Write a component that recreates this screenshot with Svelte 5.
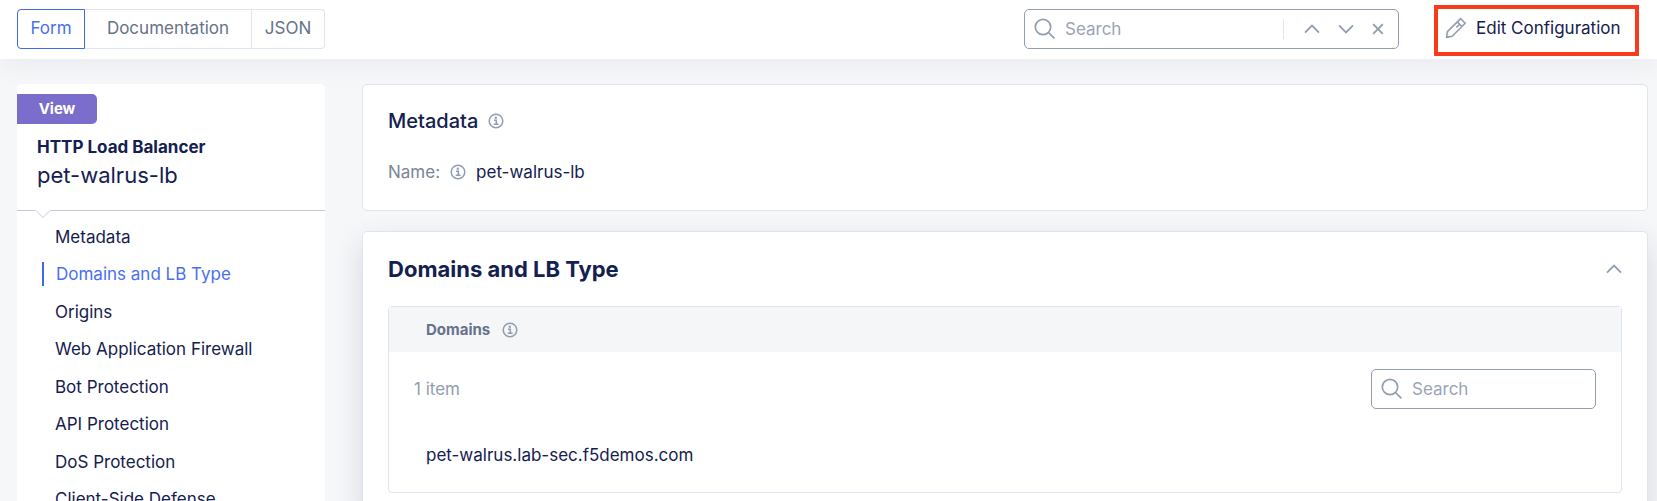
<script>
  const tabs = ['Form', 'Documentation', 'JSON'];
  let tab = $state('Form');

  const sections = [
    'Metadata',
    'Domains and LB Type',
    'Origins',
    'Web Application Firewall',
    'Bot Protection',
    'API Protection',
    'DoS Protection',
    'Client-Side Defense'
  ];
  let section = $state('Domains and LB Type');
  const domains = ['pet-walrus.lab-sec.f5demos.com'];
</script>

{#snippet info()}
  <svg class="info" viewBox="0 0 16 16" width="16" height="16" aria-hidden="true">
    <circle cx="8" cy="8" r="6.8" fill="none" stroke="currentColor" stroke-width="1.5" />
    <circle cx="7.8" cy="4.7" r="1.2" fill="currentColor" />
    <path d="M6 7.3H8.3V11.3M5.7 11.3H10.6" fill="none" stroke="currentColor" stroke-width="1.6" />
  </svg>
{/snippet}

{#snippet magnifier()}
  <svg viewBox="0 0 22 22" width="22" height="22" aria-hidden="true">
    <circle cx="9" cy="9" r="7.7" fill="none" stroke="currentColor" stroke-width="1.7" />
    <path d="M14.5 14.5L20.4 20.4" stroke="currentColor" stroke-width="1.7" />
  </svg>
{/snippet}

{#snippet chevron(d)}
  <svg viewBox="0 0 16 10" width="16" height="10" aria-hidden="true">
    <path {d} fill="none" stroke="currentColor" stroke-width="1.8" />
  </svg>
{/snippet}

<div class="page">
  <header>
    <div class="tabs">
      {#each tabs as t}
        <button class:active={tab === t} onclick={() => (tab = t)}>{t}</button>
      {/each}
    </div>
    <div class="search find">
      {@render magnifier()}
      <input type="text" placeholder="Search" aria-label="Search configuration" />
      <div class="steps">
        <button aria-label="Previous match">{@render chevron('M1 8.6L8 1.6L15 8.6')}</button>
        <button aria-label="Next match">{@render chevron('M1 1.4L8 8.4L15 1.4')}</button>
        <button aria-label="Clear search">
          <svg viewBox="0 0 12 12" width="12" height="12" aria-hidden="true">
            <path d="M1.2 1.2L10.8 10.8M10.8 1.2L1.2 10.8" stroke="currentColor" stroke-width="1.9" />
          </svg>
        </button>
      </div>
    </div>
    <button class="edit">
      <svg viewBox="0 0 22 22" width="22" height="22" aria-hidden="true">
        <path d="M1.6 20.4L2.4 14.6L15.6 1.6L20.2 6.2L7.2 19.2Z M12.3 4.9L17 9.5 M14.4 7.5L11.4 10.4" fill="none" stroke="currentColor" stroke-width="1.6" stroke-linejoin="round" />
      </svg>
      Edit Configuration
    </button>
  </header>

  <div class="body">
    <aside>
      <div class="summary">
        <span class="badge">View</span>
        <h1>HTTP Load Balancer</h1>
        <p>pet-walrus-lb</p>
        <svg class="notch" viewBox="0 0 14 9" width="14" height="9" aria-hidden="true">
          <path d="M0 0H14V1L7 8L0 1Z" fill="#fff" />
          <path d="M0.5 1L7 7.5L13.5 1" fill="none" stroke="#c5cbdd" />
        </svg>
      </div>
      <nav aria-label="Sections">
        {#each sections as s}
          <a href="#section" class:active={section === s} onclick={() => (section = s)}><span>{s}</span></a>
        {/each}
      </nav>
    </aside>

    <main>
      <section class="card metadata">
        <h2>Metadata {@render info()}</h2>
        <div class="field"><span class="label">Name:</span>{@render info()}<span>pet-walrus-lb</span></div>
      </section>

      <section class="card raised">
        <div class="head">
          <h2>Domains and LB Type</h2>
          <button aria-label="Collapse">{@render chevron('M1 8.6L8 1.6L15 8.6')}</button>
        </div>
        <div class="list">
          <h3>Domains {@render info()}</h3>
          <div class="toolbar">
            <span>{domains.length} item</span>
            <div class="search filter">
              {@render magnifier()}
              <input type="text" placeholder="Search" aria-label="Search domains" />
            </div>
          </div>
          <ul>
            {#each domains as d}<li>{d}</li>{/each}
          </ul>
        </div>
      </section>
    </main>
  </div>
</div>

<style>
  :global(body) {
    margin: 0;
  }
  .page {
    height: 100vh;
    overflow: hidden;
    background: #f6f7f9;
    color: #14204f;
    font: 17px/24px Inter, sans-serif;
  }
  .page * {
    box-sizing: border-box;
  }
  h1, h2, h3, p, ul {
    margin: 0;
    padding: 0;
  }
  button {
    font: inherit;
    color: inherit;
    background: none;
    border: 0;
    padding: 0;
    cursor: pointer;
  }
  svg {
    display: block;
    flex: none;
  }
  header {
    position: relative;
    display: flex;
    align-items: flex-start;
    height: 59px;
    padding: 5px 18px 0 17px;
    background: #fff;
    box-shadow: 0 2px 32px rgba(20, 32, 60, 0.07);
  }
  .tabs {
    display: flex;
    height: 40px;
    margin-top: 4px;
    color: #66728a;
  }
  .tabs button {
    padding: 0 0 2px;
    border: 1px solid #e0e4f0;
    border-left-width: 0;
  }
  .tabs button:nth-child(1) {
    width: 68px;
    border-radius: 4px 0 0 4px;
    border-left-width: 1px;
  }
  .tabs button:nth-child(2) {
    width: 167px;
  }
  .tabs button:nth-child(3) {
    width: 73px;
    border-radius: 0 4px 4px 0;
  }
  .tabs button.active {
    color: #4870f0;
    border: 1px solid #4068e8;
  }
  .search {
    display: flex;
    align-items: center;
    gap: 9px;
    height: 40px;
    padding: 0 9px;
    border: 1px solid #929db0;
    border-radius: 5px;
    color: #929db0;
  }
  .search input {
    flex: 1;
    min-width: 0;
    padding: 0;
    border: 0;
    outline: 0;
    background: none;
    font: inherit;
    color: #14204f;
  }
  .search input::placeholder {
    color: #9aa4b6;
    opacity: 1;
  }
  .find {
    width: 375px;
    margin: 4px 0 0 auto;
    padding-right: 14px;
  }
  .filter {
    width: 225px;
  }
  .steps {
    display: flex;
    align-items: center;
    gap: 18px;
    height: 20px;
    padding-left: 20px;
    border-left: 1px solid #e0e4f0;
    color: #929db0;
  }
  .edit {
    display: flex;
    align-items: center;
    gap: 9px;
    width: 205px;
    height: 51px;
    margin-left: 35px;
    padding: 0 0 6px 7px;
    border: 4px solid #f83b1c;
    white-space: nowrap;
  }
  .edit svg {
    color: #929db0;
  }
  .body {
    display: flex;
    align-items: flex-start;
    gap: 37px;
    padding: 25px 9px 0 17px;
  }
  aside {
    flex: none;
    width: 308px;
    border-radius: 4px;
    background: #fff;
  }
  .summary {
    position: relative;
    height: 127px;
    padding-top: 10px;
    border-bottom: 1px solid #c5cbdd;
  }
  .badge {
    display: block;
    width: 80px;
    border-radius: 0 5px 5px 0;
    background: #7b6dcb;
    color: #fff;
    font-size: 15px;
    line-height: 30px;
    font-weight: 700;
    text-align: center;
  }
  h1 {
    padding: 10px 20px 0;
    font-size: 17px;
    line-height: 26px;
    font-weight: 700;
  }
  .summary p {
    padding: 0 20px;
    font-size: 22px;
    line-height: 30px;
  }
  .notch {
    position: absolute;
    left: 19px;
    top: 126px;
  }
  nav {
    display: grid;
    grid-auto-rows: 1fr;
    min-height: 300px;
    margin-top: 7px;
  }
  nav a {
    display: flex;
    align-items: center;
    padding-left: 38px;
    color: inherit;
    text-decoration: none;
  }
  nav a.active {
    padding-left: 25px;
    color: #4870f0;
  }
  nav a.active span {
    padding-left: 12px;
    border-left: 2px solid #4068e8;
  }
  main {
    display: grid;
    flex: 1;
    gap: 20px;
    min-width: 0;
  }
  .card {
    border: 1px solid #e0e4f0;
    border-radius: 5px;
    background: #fff;
  }
  .metadata {
    padding: 23px 25px 26px;
  }
  .info {
    color: #929db0;
  }
  h2, h3 {
    display: flex;
    align-items: center;
  }
  .metadata h2 {
    gap: 10px;
    font-size: 20px;
    line-height: 26px;
    font-weight: 500;
  }
  .field {
    display: flex;
    align-items: center;
    gap: 10px;
    margin-top: 26px;
  }
  .label {
    color: #7a8599;
  }
  .raised {
    padding: 0 25px 25px;
    box-shadow: 0 12px 30px rgba(20, 32, 79, 0.14);
  }
  .head {
    display: flex;
    align-items: center;
    justify-content: space-between;
    height: 74px;
  }
  .head h2 {
    font-size: 22px;
    line-height: 30px;
    font-weight: 700;
  }
  .head button {
    color: #929db0;
  }
  .head button, .steps button {
    display: flex;
  }
  .list {
    border: 1px solid #e0e4f0;
    border-radius: 4px;
  }
  h3 {
    gap: 12px;
    height: 45px;
    padding-left: 37px;
    background: #f5f6f8;
    color: #66728a;
    font-size: 15px;
    font-weight: 700;
  }
  .toolbar {
    display: flex;
    align-items: center;
    justify-content: space-between;
    padding: 17px 25px;
    color: #929db0;
  }
  ul {
    list-style: none;
  }
  li {
    padding: 17px 37px 25px;
  }
</style>
